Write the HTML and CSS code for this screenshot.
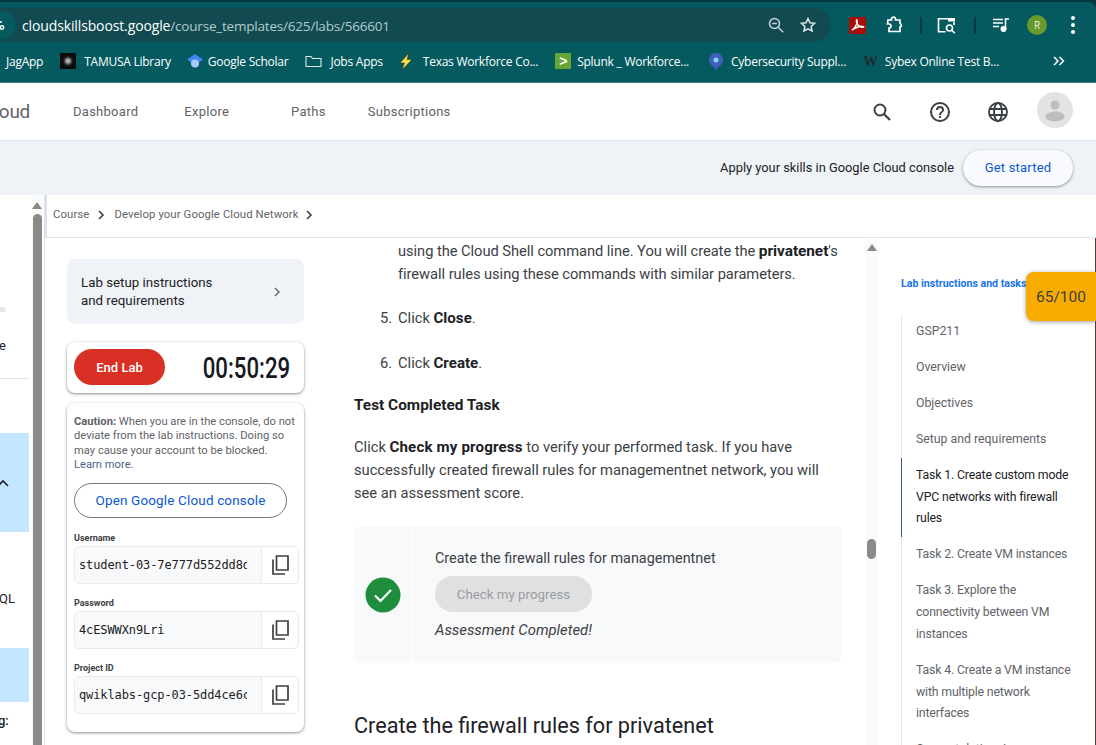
FILE: index.html
```html
<!DOCTYPE html>
<html lang="en">
<head>
<meta charset="utf-8">
<title>Lab</title>
<link rel="stylesheet" href="styles.css">
</head>
<body>
<header class="chrome">
  <div class="toolbar">
    <div class="omnibox">
      <span class="site-chip"><svg width="12" height="12" viewBox="0 0 12 12" fill="none" stroke="#fff" stroke-width="1.4"><path d="M0 3h7M0 8h3"/><circle cx="7" cy="8.5" r="1.7"/></svg></span>
      <span class="url"><span class="url-host">cloudskillsboost.google</span>/course_templates/625/labs/566601</span>
      <svg class="omni-icon" width="18" height="18" viewBox="0 0 18 18" fill="none" stroke="#c4d6d8" stroke-width="1.5"><circle cx="7.5" cy="7.5" r="5"/><path d="M11.2 11.2l5 5M5.2 7.5h4.6"/></svg>
      <svg class="omni-icon" width="18" height="18" viewBox="0 0 24 24" fill="none" stroke="#dbe7e8" stroke-width="2"><path d="M12 3.5l2.6 5.6 6.1.7-4.5 4.2 1.2 6L12 17l-5.4 3 1.2-6-4.5-4.2 6.1-.7z"/></svg>
    </div>
    <div class="tb-icons">
      <span class="pdf"><svg width="16" height="16" viewBox="0 0 16 16" fill="none" stroke="#fff" stroke-width="1.5"><path d="M2 13c2-1 4-4 5-7 .5-2 0-3.500-.5-3-.5 1 .5 4 2 5.500s4 2 5 1.500-2-1-4-.5-5 1.500-7.500 3.500z"/></svg></span>
      <svg class="ext" width="18" height="18" viewBox="0 0 18 18" fill="none" stroke="#fff" stroke-width="1.7"><path d="M2 4h3.500a2 2 0 0 1 4-1.500V4H14v3.500a1.800 1.800 0 0 1 0 3.500V15.500H3v-3.500a2 2 0 0 0 0-4H1.500z"/></svg>
      <span class="tb-sep"></span>
      <svg class="reading" width="19" height="17" viewBox="0 0 19 17" fill="none" stroke="#fff" stroke-width="1.600"><path d="M11 1.800H1.500v13h7"/><rect x="11" y="1" width="7" height="3.500" fill="#fff" stroke="none"/><path d="M17 5v3"/><circle cx="12.500" cy="11" r="3"/><path d="M14.800 13.300l3 3"/></svg>
      <span class="tb-sep tb-sep2"></span>
      <svg class="media" width="16" height="14" viewBox="0 0 16 14" fill="none" stroke="#fff" stroke-width="1.500"><path d="M0 1.500h10M0 5h10M0 8.500h6"/><path d="M12.500 11V1H16"/><circle cx="10.500" cy="11" r="2.300" fill="#fff"/></svg>
      <span class="profile">R</span>
      <span class="kebab"><i></i><i></i><i></i></span>
    </div>
  </div>
  <nav class="bookmarks">
    <span class="bm bm-first">JagApp</span>
    <span class="bm bm-tamusa"><span class="fav-tamusa"></span>TAMUSA Library</span>
    <span class="bm bm-scholar"><svg width="16" height="14" viewBox="0 0 16 14"><path d="M8 0l8 5.500-8 5.500-8-5.500z" fill="#4285f4"/><circle cx="8" cy="9.500" r="4" fill="#a8c7fa"/></svg>Google Scholar</span>
    <span class="bm bm-jobs"><svg width="17" height="13" viewBox="0 0 17 13" fill="none" stroke="#dfe9ea" stroke-width="1.100"><path d="M1 11.500V1.500h5l1.500 2H16v8z"/></svg>Jobs Apps</span>
    <span class="bm bm-texas"><svg width="14" height="17" viewBox="0 0 14 17"><path d="M10 0L1 10h4.500l-2.500 7 10-10.500H8z" fill="#fde047" stroke="#222" stroke-width=".5"/></svg>Texas Workforce Co...</span>
    <span class="bm bm-splunk"><span class="fav-splunk">&gt;</span>Splunk _ Workforce...</span>
    <span class="bm bm-cyber"><svg width="14" height="17" viewBox="0 0 14 17"><path d="M7 0a7 7 0 0 0-3 13.300L7 17l3-3.700A7 7 0 0 0 7 0z" fill="#3f5fbf"/><circle cx="7" cy="7" r="2.500" fill="#7fd4e8"/></svg>Cybersecurity Suppl...</span>
    <span class="bm"><span class="fav-w">W</span>Sybex Online Test B...</span>
    <svg class="bm-more" width="12" height="10" viewBox="0 0 12 10" fill="none" stroke="#fff" stroke-width="1.500"><path d="M1 1l4 4-4 4M6.500 1l4 4-4 4"/></svg>
  </nav>
</header>

<div class="site-nav">
  <span class="logo"><span>Cloud</span></span>
  <a class="nl nl-dash">Dashboard</a>
  <a class="nl nl-explore">Explore</a>
  <a class="nl nl-paths">Paths</a>
  <a class="nl">Subscriptions</a>
  <div class="nav-tools">
    <svg width="24" height="24" viewBox="0 0 24 24" fill="none" stroke="#3c4043" stroke-width="2"><circle cx="10" cy="10" r="5.500"/><path d="M14 14l6 6" stroke-width="2.200"/></svg>
    <svg width="24" height="24" viewBox="0 0 24 24" fill="#3c4043"><path d="M11 18h2v-2h-2zm1-16a10 10 0 1 0 0 20 10 10 0 0 0 0-20zm0 18a8 8 0 1 1 0-16 8 8 0 0 1 0 16zm0-14a4 4 0 0 0-4 4h2a2 2 0 1 1 4 0c0 2-3 1.750-3 5h2c0-2.250 3-2.500 3-5a4 4 0 0 0-4-4z"/></svg>
    <svg width="24" height="24" viewBox="0 0 24 24" fill="none" stroke="#3c4043" stroke-width="1.900"><circle cx="12" cy="12" r="9"/><ellipse cx="12" cy="12" rx="4" ry="9"/><path d="M3.500 9h17M3.500 15h17"/></svg>
    <span class="avatar"><svg width="36" height="36" viewBox="0 0 36 36" fill="#bdbdbd"><circle cx="18" cy="13" r="4.500"/><ellipse cx="18" cy="24.500" rx="9.500" ry="5"/></svg></span>
  </div>
</div>

<div class="banner">
  <span>Apply your skills in Google Cloud console</span>
  <button class="get-started">Get started</button>
</div>

<main class="workspace">
  <aside class="course-rail">
    <div class="rail-items">
      <div class="rail-bar"></div>
      <div class="rail-e">e</div>
      <div class="rail-line"></div>
      <div class="rail-active rail-a1"><svg width="12" height="8" viewBox="0 0 12 8" fill="none" stroke="#202124" stroke-width="1.600"><path d="M1 7l5-5 5 5"/></svg></div>
      <div class="rail-ql">QL</div>
      <div class="rail-active rail-a2"></div>
      <div class="rail-g">g:</div>
    </div>
    <div class="sb rail-sb"><span class="sb-arrow"></span><span class="sb-thumb rail-thumb"></span></div>
  </aside>

  <div class="lab">
    <div class="crumbs">
      <span>Course</span><svg width="8" height="10" viewBox="0 0 8 10" fill="none" stroke="#3c4043" stroke-width="1.600"><path d="M2 1l4 4-4 4"/></svg>
      <span>Develop your Google Cloud Network</span><svg width="8" height="10" viewBox="0 0 8 10" fill="none" stroke="#3c4043" stroke-width="1.600"><path d="M2 1l4 4-4 4"/></svg>
    </div>
    <div class="lab-body">
      <section class="panel">
        <div class="setup"><span>Lab setup instructions<br>and requirements</span><svg width="8" height="10" viewBox="0 0 8 10" fill="none" stroke="#5f6368" stroke-width="1.400"><path d="M2 1l4 4-4 4"/></svg></div>
        <div class="card timer-card"><button class="end-lab">End Lab</button><span class="timer">00:50:29</span></div>
        <div class="card cred-card">
          <p class="caution"><b>Caution:</b> When you are in the console, do not deviate from the lab instructions. Doing so may cause your account to be blocked. <span class="learn">Learn more.</span></p>
          <button class="open-console">Open Google Cloud console</button>
          <label class="f-label">Username</label>
          <div class="field"><span class="f-val"><span class="f-text">student-03-7e777d552dd8d</span></span><span class="f-copy"><svg class="copy" width="18" height="20" viewBox="0 0 18 20" fill="none" stroke="#3c4043" stroke-width="1.700"><path d="M2 4.500V19h12"/><path d="M5.500 1h11.500v14H5.500z"/></svg></span></div>
          <label class="f-label">Password</label>
          <div class="field"><span class="f-val"><span class="f-text">4cESWWXn9Lri</span></span><span class="f-copy"><svg class="copy" width="18" height="20" viewBox="0 0 18 20" fill="none" stroke="#3c4043" stroke-width="1.700"><path d="M2 4.500V19h12"/><path d="M5.500 1h11.500v14H5.500z"/></svg></span></div>
          <label class="f-label">Project ID</label>
          <div class="field"><span class="f-val"><span class="f-text">qwiklabs-gcp-03-5dd4ce6c9</span></span><span class="f-copy"><svg class="copy" width="18" height="20" viewBox="0 0 18 20" fill="none" stroke="#3c4043" stroke-width="1.700"><path d="M2 4.500V19h12"/><path d="M5.500 1h11.500v14H5.500z"/></svg></span></div>
        </div>
      </section>

      <article class="doc">
        <div class="doc-li doc-cont">using the Cloud Shell command line. You will create the <b>privatenet</b>'s firewall rules using these commands with similar parameters.</div>
        <div class="doc-li doc-5"><span class="num">5.</span>Click <b>Close</b>.</div>
        <div class="doc-li doc-6"><span class="num">6.</span>Click <b>Create</b>.</div>
        <p class="doc-test">Test Completed Task</p>
        <p class="doc-p">Click <b>Check my progress</b> to verify your performed task. If you have successfully created firewall rules for managementnet network, you will see an assessment score.</p>
        <div class="assess">
          <div class="assess-icon"><svg width="36" height="36" viewBox="0 0 36 36"><circle cx="18" cy="18" r="17.500" fill="#1e8e3e"/><path d="M10 18.500l5.500 5.500L26 13" fill="none" stroke="#fff" stroke-width="2.200"/></svg></div>
          <div class="assess-body">
            <div>Create the firewall rules for managementnet</div>
            <button class="check">Check my progress</button>
            <div class="done">Assessment Completed!</div>
          </div>
        </div>
        <h2 class="doc-h2">Create the firewall rules for privatenet</h2>
      </article>

      <div class="sb doc-sb"><span class="sb-arrow"></span><span class="sb-thumb doc-thumb"></span></div>

      <aside class="toc">
        <div class="toc-title">Lab instructions and tasks</div>
        <ul class="toc-list">
          <li>GSP211</li>
          <li>Overview</li>
          <li>Objectives</li>
          <li>Setup and requirements</li>
          <li class="task current">Task 1. Create custom mode VPC networks with firewall rules</li>
          <li class="task">Task 2. Create VM instances</li>
          <li class="task">Task 3. Explore the connectivity between VM instances</li>
          <li class="task">Task 4. Create a VM instance with multiple network interfaces</li>
          <li>Congratulations!</li>
        </ul>
      </aside>
    </div>
  </div>
  <div class="score">65/100</div>
</main>
</body>
</html>
```
FILE: styles.css
```css
* { box-sizing: border-box; }
html, body { margin: 0; height: 745px; overflow: hidden; }
body { width: 1096px; background: #fff; font-family: Roboto, "Liberation Sans", sans-serif; color: #202124; }
button { font-family: inherit; cursor: pointer; }
p { margin: 0; }

/* browser chrome */
.chrome { height: 83px; background: #08383d; font-family: "Open Sans", "Noto Sans", sans-serif; overflow: hidden; padding-top: 2px; }
.toolbar { height: 40px; padding-top: 6px; display: flex; align-items: center; background: #055a60; border-top-right-radius: 8px; }
.omnibox { width: 851px; height: 34px; margin-left: -20px; border-radius: 17px; background: #114a50; display: flex; align-items: center; flex: none; }
.site-chip { width: 33px; height: 28px; margin-left: 3px; border-radius: 14px; background: #055a60; display: flex; align-items: center; justify-content: flex-end; padding-right: 9px; }
.url { margin-left: 6px; font-size: 13.500px; letter-spacing: -.2px; color: #b4cbcd; flex: 1; white-space: nowrap; }
.url-host { color: #fff; font-size: 14px; letter-spacing: -.13px; }
.omni-icon { margin-right: 14px; flex: none; }
.tb-icons { flex: 1; display: flex; align-items: center; height: 34px; padding-left: 18px; }
.pdf { width: 17px; height: 17px; border-radius: 2px; background: #a80f06; display: flex; align-items: center; justify-content: center; }
.ext { margin-left: 20px; }
.tb-sep { width: 2px; height: 17px; background: #08383d; margin-left: 16px; }
.tb-sep2 { margin-left: 18px; }
.reading { margin-left: 15px; }
.media { margin-left: 17px; }
.profile { width: 20px; height: 20px; border-radius: 50%; background: #6a9a2d; color: #e8f0d8; font-size: 10px; margin-left: 18px; display: flex; align-items: center; justify-content: center; }
.kebab { margin-left: 24px; display: flex; flex-direction: column; gap: 3px; }
.kebab i { width: 4px; height: 4px; border-radius: 50%; background: #fff; display: block; }
.bookmarks { height: 41px; background: #055a60; border-bottom: 1px solid #3f8085; display: flex; align-items: center; color: #fff; font-size: 12px; white-space: nowrap; padding: 0 0 2px 6px; position: relative; }
.bm { display: flex; align-items: center; gap: 7px; margin-right: 17px; letter-spacing: -.25px; }
.bm-tamusa { gap: 8px; margin-right: 16px; }
.bm-scholar { gap: 5px; }
.bm-jobs { gap: 8px; margin-right: 16px; }
.bm-texas { gap: 10px; margin-right: 17px; }
.bm-splunk { gap: 6px; margin-right: 20px; }
.bm-cyber { gap: 8px; margin-right: 17px; }
.fav-tamusa { width: 16px; height: 16px; background: radial-gradient(circle at 50% 50%, #aaa 0 2px, #555 3px, #111 5px, #0b0b0b 6px); }
.fav-splunk { width: 16px; height: 16px; background: #65a637; color: #fff; font: 700 14px/16px "Liberation Sans", sans-serif; text-align: center; }
.fav-w { color: #1c2b2d; font: 700 15px/16px "Liberation Serif", serif; }
.bm-more { position: absolute; left: 1053px; top: 14px; }

/* site nav */
.site-nav { height: 58px; border-bottom: 1px solid #dde3ea; display: flex; align-items: center; font-size: 13px; color: #5f6368; letter-spacing: .27px; }
.logo { width: 30px; overflow: hidden; display: flex; justify-content: flex-end; font-size: 19px; letter-spacing: -.3px; margin-right: 43px; margin-top: -1px; }
.nl { display: block; }
.nl-dash { margin-right: 46px; }
.nl-explore { margin-right: 62px; }
.nl-paths { margin-right: 42px; }
.nav-tools { margin-left: auto; margin-right: 23px; display: flex; align-items: center; gap: 34px; }
.avatar { width: 36px; height: 36px; border-radius: 50%; background: #e3e3e3; display: block; margin-left: -7px; margin-top: -4px; }
.avatar svg { display: block; }

/* banner */
.banner { height: 54px; background: #eff2f7; display: flex; align-items: center; justify-content: flex-end; gap: 9px; padding: 0 23px 2px 0; font-size: 12.850px; color: #202124; }
.get-started { width: 110px; height: 36px; margin-top: 1px; border: 0; border-radius: 18px; background: #f8fafd; color: #0b57d0; font-size: 13px; letter-spacing: .2px; box-shadow: 0 1px 3px rgba(60,64,67,.55); }

/* workspace */
.workspace { position: relative; height: 550px; display: flex; }
.course-rail { width: 44px; flex: none; display: flex; }
.rail-items { width: 30px; flex: none; font-size: 13px; color: #202124; text-align: right; overflow: hidden; }
.rail-bar { height: 5px; width: 6px; margin-top: 112px; background: #e3e7ee; border-radius: 0 3px 3px 0; }
.rail-e { margin-top: 25px; line-height: 18px; text-align: left; margin-left: -1px; }
.rail-line { height: 1px; margin-top: 23px; background: #dde3ea; width: 29px; }
.rail-active { background: #c2e7ff; width: 29px; }
.rail-a1 { height: 99px; margin-top: 54px; padding-top: 46px; text-align: left; }
.rail-a1 svg { display: block; margin-left: -3px; }
.rail-ql { margin-top: 58px; line-height: 18px; text-align: left; margin-left: -1px; width: 16px; }
.rail-a2 { height: 54px; margin-top: 40px; }
.rail-g { margin-top: 10px; line-height: 18px; text-align: left; font-weight: 500; margin-left: -2px; }
.sb { flex: none; display: flex; flex-direction: column; align-items: center; background: #fafafa; }
.sb-arrow { width: 0; height: 0; border-left: 5px solid transparent; border-right: 5px solid transparent; border-bottom: 7px solid #8a8a8a; flex: none; }
.sb-thumb { width: 9px; background: #8a8a8a; border-radius: 5px; display: block; flex: none; }
.rail-sb { width: 10px; margin-left: 2px; padding-top: 7px; }
.rail-thumb { height: 560px; margin-top: 5px; }
.doc-sb { width: 11px; margin-left: 24px; padding-top: 6px; }
.doc-thumb { height: 20px; margin-top: 288px; }

.lab { flex: 1; min-width: 0; display: flex; flex-direction: column; border-left: 1px solid #dde3ea; }
.crumbs { height: 43px; flex: none; padding: 0 0 3px 8px; display: flex; align-items: center; font-size: 11.300px; letter-spacing: .12px; color: #5f6368; border-bottom: 1px solid #dde3ea; box-shadow: inset 282px -2px 0 -280px #dde3ea; position: relative; }
.crumbs svg { margin: 0 9px 0 8px; }
.crumbs svg:last-child { margin-left: 6px; }
.lab-body { flex: 1; min-height: 0; display: flex; overflow: hidden; border-right: 1px solid #5c3438; }

.panel { width: 237px; flex: none; margin-left: 22px; padding-top: 21px; }
.setup { height: 65px; border-radius: 8px; background: #eff2f7; padding: 0 23px 0 14px; display: flex; align-items: center; justify-content: space-between; font-size: 13.300px; line-height: 18px; }
.card { background: #fff; border-radius: 8px; box-shadow: 0 1px 3px rgba(60,64,67,.6); }
.timer-card { height: 51px; margin-top: 18px; padding: 7px 14px 0 7px; display: flex; justify-content: space-between; }
.end-lab { width: 91px; height: 36px; border: 0; border-radius: 18px; background: #d93025; color: #fff; font-size: 13px; font-weight: 500; }
.timer { display: inline-block; font-size: 30px; font-weight: 500; line-height: 38px; transform: scaleX(.74); transform-origin: right center; white-space: nowrap; color: #15191e; }
.cred-card { height: 329px; margin-top: 10px; padding: 12px 7px 0 7px; }
.caution { font-size: 11.200px; line-height: 14.400px; color: #5f6368; }
.caution b { font-weight: 700; }
.learn { display: block; color: #4f6588; }
.open-console { display: block; width: 213px; height: 35px; margin: 10px 0 14px; border: 1px solid #747775; border-radius: 18px; background: #fff; color: #0b57d0; font-size: 13.500px; letter-spacing: .15px; padding: 0; }
.f-label { display: block; font-size: 9px; line-height: 12px; font-weight: 700; color: #3c4043; margin: 0 0 2px; }
.field { height: 38px; width: 225px; margin-bottom: 13px; border: 1px solid #e8eaed; border-radius: 5px; display: flex; overflow: hidden; }
.f-val { width: 187px; flex: none; background: #f8f9fa; border-right: 1px solid #e8eaed; padding: 0 0 0 4px; font: 12px/36px "DejaVu Sans Mono", monospace; letter-spacing: -.1px; color: #202124; }
.f-text { display: block; width: 168px; overflow: hidden; white-space: nowrap; }
.f-copy { flex: 1; display: flex; align-items: center; justify-content: center; }

.doc { width: 488px; flex: none; margin-left: 50px; padding-top: 2px; font-size: 14.700px; line-height: 23px; color: #3c4043; }
.doc b { color: #202124; font-weight: 700; font-size: 15.100px; }
.doc-li { position: relative; padding-left: 44px; }
.doc-cont { letter-spacing: -.05px; }
.doc-cont b { font-size: 15.400px; }
.doc-5 { margin-top: 21px; }
.doc-6 { margin-top: 22px; }
.num { position: absolute; left: 26px; top: 0; }
.doc-test { margin-top: 19px; font-weight: 700; font-size: 15.400px; color: #202124; }
.doc-p { margin-top: 19px; width: 476px; }
.doc-p b { letter-spacing: .15px; }
.assess { margin-top: 21px; height: 137px; border-radius: 8px; background: #f8f9fa; display: flex; font-size: 14.400px; line-height: 20px; color: #3c4043; }
.assess-icon { width: 59px; border-right: 1px solid #fff; display: flex; align-items: center; justify-content: center; flex: none; }
.assess-body { padding: 23px 0 0 22px; }
.check { display: block; width: 157px; height: 36px; margin: 7px 0 8px; border: 0; border-radius: 18px; background: #dfe0e2; color: #9a9ca0; font-size: 13.300px; padding: 0; }
.done { font-style: italic; font-size: 14.850px; }
.doc-h2 { margin: 47px 0 0; font-size: 21.650px; line-height: 32px; font-weight: 400; color: #202124; }

.toc { width: 195px; flex: none; margin-left: 24px; padding-top: 39px; font-size: 12.300px; overflow: hidden; }
.toc-title { font-size: 10.600px; font-weight: 700; line-height: 14px; color: #1a73e8; white-space: nowrap; }
.toc-list { list-style: none; margin: 23px 0 0; padding: 0; border-left: 1px solid #e3e7ee; }
.toc-list li { padding: 7.150px 8px 7.150px 14px; margin-left: -1px; border-left: 1px solid transparent; line-height: 21.700px; color: #5f6368; width: 182px; }
.toc-list .task { letter-spacing: -.16px; }
.toc-list .current { color: #202124; border-left-color: #35558f; }

.score { position: absolute; right: 0; top: 77px; width: 70px; height: 49px; background: #f9ab00; border-radius: 8px 0 0 8px; font-size: 15.500px; color: #3c4043; display: flex; align-items: center; justify-content: center; box-shadow: 0 1px 4px rgba(60,64,67,.5); }
```
